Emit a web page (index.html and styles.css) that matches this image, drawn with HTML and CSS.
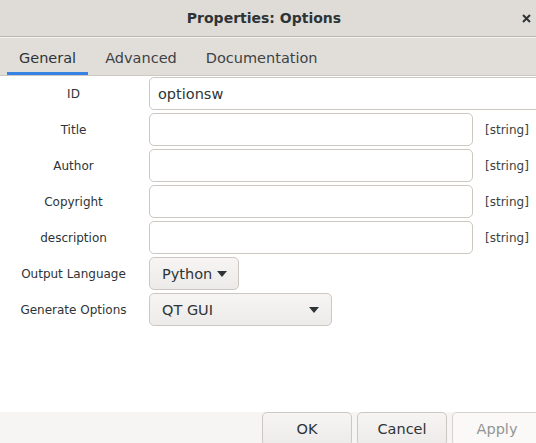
FILE: index.html
```html
<!DOCTYPE html>
<html>
<head>
<meta charset="utf-8">
<link rel="stylesheet" href="styles.css">
</head>
<body>
<div class="window">
  <header class="titlebar">
    <span class="title">Properties: Options</span>
    <span class="close"><svg width="9" height="9" viewBox="0 0 9 9"><path d="M1 1 L8 8 M8 1 L1 8" stroke="#2e3436" stroke-width="2" fill="none"/></svg></span>
  </header>
  <nav class="tabs">
    <span class="tab active">General</span>
    <span class="tab">Advanced</span>
    <span class="tab">Documentation</span>
  </nav>
  <main class="content">
    <div class="form">
      <span class="label">ID</span>
      <div class="entry wide">optionsw</div>

      <span class="label">Title</span>
      <div class="entry"></div>
      <span class="type">[string]</span>

      <span class="label">Author</span>
      <div class="entry"></div>
      <span class="type">[string]</span>

      <span class="label">Copyright</span>
      <div class="entry"></div>
      <span class="type">[string]</span>

      <span class="label">description</span>
      <div class="entry"></div>
      <span class="type">[string]</span>

      <span class="label">Output Language</span>
      <div class="cell"><div class="combo small">Python<span class="arrow"></span></div></div>

      <span class="label">Generate Options</span>
      <div class="cell"><div class="combo large">QT GUI<span class="arrow"></span></div></div>
    </div>
  </main>
  <footer class="actions">
    <button class="btn">OK</button>
    <button class="btn">Cancel</button>
    <button class="btn disabled">Apply</button>
  </footer>
</div>
</body>
</html>
```
FILE: styles.css
```css
html, body {
  margin: 0;
  padding: 0;
  background: #ffffff;
}
body {
  font-family: "DejaVu Sans", sans-serif;
  color: #2e3436;
}
.window {
  width: 536px;
  height: 443px;
  display: flex;
  flex-direction: column;
  overflow: hidden;
}
.titlebar {
  flex: 0 0 36px;
  display: flex;
  align-items: center;
  background: #dfdcd8;
  border-bottom: 1px solid #bfb8b1;
}
.title {
  flex: 1;
  text-align: center;
  padding-left: 6px;
  font-weight: bold;
  font-size: 14px;
  color: #2e3436;
}
.close {
  display: flex;
  width: 9px;
  height: 9px;
  margin-right: 5px;
  margin-top: 1px;
}
.tabs {
  flex: 0 0 37px;
  display: flex;
  gap: 5px;
  padding-left: 7px;
  background: #e1deda;
  border-top: 1px solid #f3f2f0;
  border-bottom: 1px solid #cdc7c2;
}
.tab {
  display: flex;
  align-items: center;
  padding: 2px 12px 0;
  font-size: 14.5px;
  color: #3d4244;
}
.tab.active {
  color: #2e3436;
  box-shadow: inset 0 -3px 0 #3584e4;
}
.content {
  flex: 1;
  background: #ffffff;
  padding-top: 1px;
}
.form {
  display: grid;
  grid-template-columns: 149px 324px 1fr;
  grid-auto-rows: 33px;
  row-gap: 3px;
}
.label {
  display: flex;
  align-items: center;
  justify-content: center;
  padding-right: 2px;
  font-size: 12px;
  color: #2e3436;
}
.entry {
  box-sizing: border-box;
  border: 1px solid #cdc7c2;
  border-radius: 5px;
  background: #ffffff;
  display: flex;
  align-items: center;
  padding-left: 8px;
  font-size: 14.5px;
  color: #2e3436;
}
.entry.wide {
  grid-column: 2 / 4;
  margin-right: -6px;
}
.type {
  display: flex;
  align-items: center;
  padding-left: 12px;
  font-size: 12px;
  color: #3a3f41;
}
.cell {
  grid-column: 2 / 4;
  display: flex;
}
.combo {
  box-sizing: border-box;
  height: 33px;
  border: 1px solid #cdc7c2;
  border-radius: 5px;
  background: linear-gradient(to top, #edebe9, #f6f5f4);
  display: flex;
  align-items: center;
  padding: 0 12px 0 12px;
  font-size: 14.5px;
  color: #2e3436;
}
.combo.small {
  width: 90px;
  gap: 5px;
}
.combo.large {
  width: 183px;
  justify-content: space-between;
}
.arrow {
  width: 0;
  height: 0;
  border-left: 5.5px solid transparent;
  border-right: 5.5px solid transparent;
  border-top: 6px solid #2e3436;
  margin-top: 1px;
}
.actions {
  flex: 0 0 31px;
  min-height: 0;
  display: flex;
  justify-content: flex-end;
  align-items: flex-start;
  gap: 5px;
  background: #f6f5f4;
  margin-right: -6px;
}
.btn {
  box-sizing: border-box;
  width: 90px;
  height: 34px;
  flex: 0 0 90px;
  border: 1px solid #cdc7c2;
  border-radius: 5px;
  background: linear-gradient(to top, #edebe9, #f6f5f4);
  font-family: "DejaVu Sans", sans-serif;
  font-size: 14.5px;
  color: #2e3436;
  padding: 0 0 1px;
}
.btn.disabled {
  background: #faf9f8;
  border-color: #d5d0cc;
  color: #929595;
}
```
